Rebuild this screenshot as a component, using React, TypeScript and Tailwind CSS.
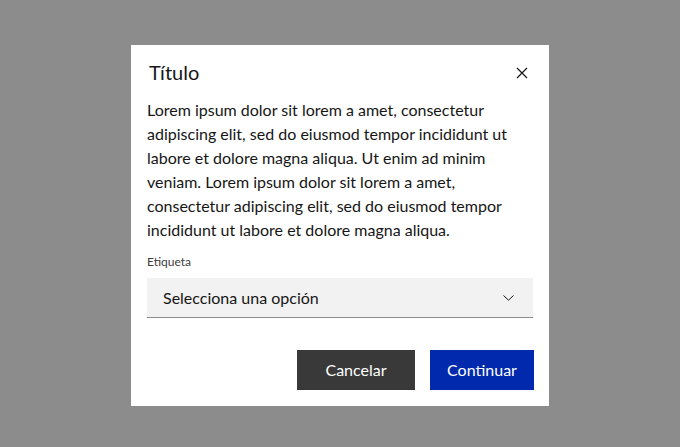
import React from "react";

export default function App() {
  return (
    <div
      className="w-[680px] h-[447px] bg-[#8c8c8c] flex justify-center pt-[45px]"
      style={{ fontFamily: "Lato, 'Open Sans', sans-serif" }}
    >
      <div className="w-[418px] h-[361px] bg-white flex flex-col">
        <div className="flex items-start justify-between pl-[18px] pr-[20px] pt-[13px]">
          <h2 className="text-[20px] leading-[28px] font-normal text-[#161616]">Título</h2>
          <button className="mt-[8px] w-[14px] h-[14px] flex items-center justify-center">
            <svg width="12" height="12" viewBox="0 0 12 12" fill="none" stroke="#161616" strokeWidth="1.2">
              <path d="M1 1 L11 11 M11 1 L1 11" />
            </svg>
          </button>
        </div>
        <p className="px-[16px] mt-[12px] text-[16px] leading-[24px] text-[#161616]">
          Lorem ipsum dolor sit lorem a amet, consectetur adipiscing elit, sed do eiusmod tempor incididunt ut labore et dolore magna aliqua. Ut enim ad minim veniam. Lorem ipsum dolor sit lorem a amet, consectetur adipiscing elit, sed do eiusmod tempor incididunt ut labore et dolore magna aliqua.
        </p>
        <div className="px-[16px] mt-[12px]">
          <label className="block text-[12px] leading-[16px] text-[#3d3d3d]">Etiqueta</label>
          <div className="mt-[8px] h-[40px] bg-[#f2f2f2] border-b border-[#8d8d8d] flex items-center justify-between pl-[16px] pr-[19px]">
            <span className="text-[16px] text-[#161616]">Selecciona una opción</span>
            <svg width="11" height="6" viewBox="0 0 11 6" fill="none" stroke="#161616" strokeWidth="1">
              <path d="M0.5 0.5 L5.5 5.2 L10.5 0.5" />
            </svg>
          </div>
        </div>
        <div className="flex justify-end gap-[15px] pr-[15px] mt-[32px]">
          <button className="w-[118px] h-[40px] bg-[#393939] text-white text-[16px]">Cancelar</button>
          <button className="w-[104px] h-[40px] bg-[#0029ad] text-white text-[16px]">Continuar</button>
        </div>
      </div>
    </div>
  );
}
